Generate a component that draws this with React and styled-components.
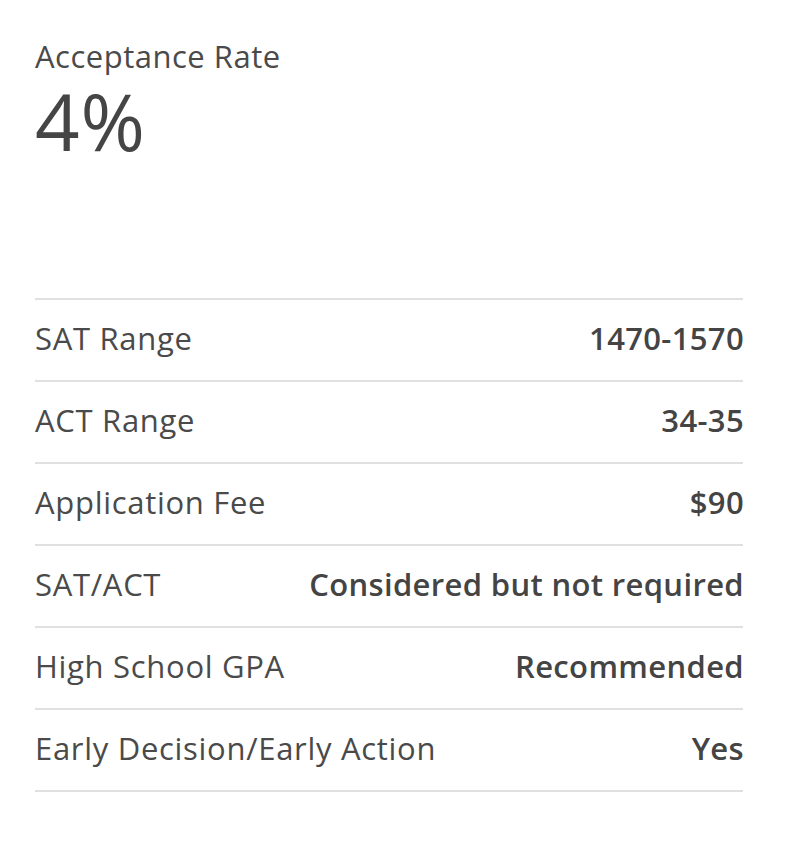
import React from 'react';
import styled, { createGlobalStyle } from 'styled-components';

const GlobalStyle = createGlobalStyle`
  body {
    margin: 0;
    background: #fff;
    font-family: "Open Sans", Lato, sans-serif;
    color: #454545;
  }
`;

const Card = styled.section`
  width: 708px;
  padding: 36px 0 0 35px;
`;

const Header = styled.div`
  height: 262px;
`;

const Label = styled.div`
  font-size: 31px;
  line-height: 40px;
  letter-spacing: 0.5px;
  color: #4a4a4a;
`;

const BigValue = styled.div`
  font-size: 78px;
  line-height: 91px;
  letter-spacing: 1px;
  color: #454545;
`;

const List = styled.dl`
  margin: 0;
  border-top: 2px solid #e0e0e0;
`;

const Row = styled.div`
  box-sizing: border-box;
  display: flex;
  justify-content: space-between;
  align-items: center;
  height: 82px;
  padding-bottom: 4px;
  border-bottom: 2px solid #e0e0e0;
`;

const Term = styled.dt`
  font-size: 31px;
  letter-spacing: 0.7px;
  color: #4a4a4a;
`;

const Value = styled.dd`
  margin: 0 -1px 0 0;
  font-size: 31px;
  font-weight: 600;
  letter-spacing: 0.35px;
  color: #444;
`;

const rows = [
  ['SAT Range', '1470-1570'],
  ['ACT Range', '34-35'],
  ['Application Fee', '$90'],
  ['SAT/ACT', 'Considered but not required'],
  ['High School GPA', 'Recommended'],
  ['Early Decision/Early Action', 'Yes'],
];

export default function App() {
  return (
    <>
      <GlobalStyle />
      <Card>
        <Header>
          <Label>Acceptance Rate</Label>
          <BigValue>4%</BigValue>
        </Header>
        <List>
          {rows.map(([term, value]) => (
            <Row key={term}>
              <Term>{term}</Term>
              <Value>{value}</Value>
            </Row>
          ))}
        </List>
      </Card>
    </>
  );
}
